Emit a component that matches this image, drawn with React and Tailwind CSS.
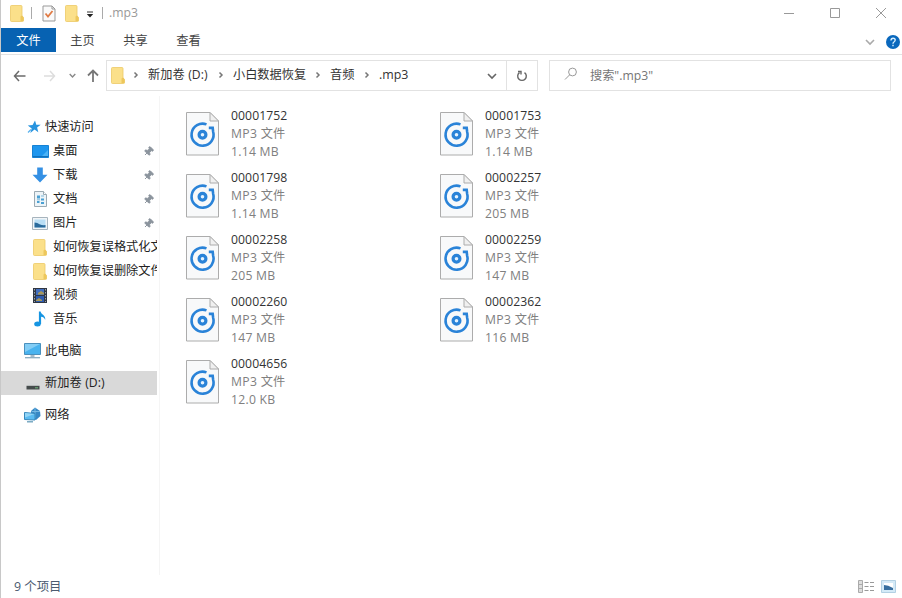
import { Pin } from 'lucide-react';

const files = [
    { name: '00001752', size: '1.14 MB' },
    { name: '00001753', size: '1.14 MB' },
    { name: '00001798', size: '1.14 MB' },
    { name: '00002257', size: '205 MB' },
    { name: '00002258', size: '205 MB' },
    { name: '00002259', size: '147 MB' },
    { name: '00002260', size: '147 MB' },
    { name: '00002362', size: '116 MB' },
    { name: '00004656', size: '12.0 KB' },
];

const FolderIcon = () => (
    <svg width="14" height="17" viewBox="0 0 14 17" className="shrink-0">
        <path d="M.5 1.5Q.5.5 1.5.5H11q1 0 1 1v9.500l1.500 1.500v3q0 1-1 1h-11q-1 0-1-1z" fill="#fbe08a" stroke="#ecc966" strokeWidth=".8" />
        <path d="M10.500 16v-4.500l1.500-1 1.500 1.500v4z" fill="#edc75c" />
    </svg>
);

const CheckDocIcon = () => (
    <svg width="14" height="17" viewBox="0 0 14 17" className="shrink-0">
        <path d="M1 1h9l3 3v12H1z" fill="#fafafa" stroke="#999" />
        <path d="M10 1v3h3" fill="none" stroke="#999" />
        <path d="M3.500 8.500l2.500 3 4.500-5.500" fill="none" stroke="#e07b45" strokeWidth="1.800" />
    </svg>
);

const Chevron = ({ className }) => (
    <svg width="6" height="8" viewBox="0 0 6 8" className={className}>
        <path d="M1.500 1.500l2.500 2.500-2.500 2.500" fill="none" stroke="#777" strokeWidth="1.500" />
    </svg>
);

const DownChevron = ({ size = 10, color = '#777', width = 1.6 }) => (
    <svg width={size} height={size} viewBox="0 0 10 10">
        <path d="M1 3l4 4 4-4" fill="none" stroke={color} strokeWidth={width} />
    </svg>
);

const StarIcon = () => (
    <svg width="14" height="14" viewBox="0 0 14 14">
        <path d="M8 .5l1.300 4.200 4.400.1-3.600 2.700 1.200 4.800-3.800-2.700L3.300 13l1.400-4.500L.8 5.400l4.800-.5z" fill="#2794df" />
        <path d="M1 12.500l3-3" stroke="#5ab2ec" strokeWidth="1.200" />
    </svg>
);

const DesktopIcon = () => (
    <svg width="17" height="13" viewBox="0 0 17 13">
        <path d="M.5.500h16v12H.5z" fill="#1e96ee" stroke="#1682d4" />
        <path d="M10 11l6-6v6z" fill="#4bb3f6" />
        <path d="M1 11.500h15" stroke="#1271bb" />
    </svg>
);

const DownloadIcon = () => (
    <svg width="16" height="16" viewBox="0 0 16 16">
        <path d="M5.200.5h5.600v7.300h4.700L8 15.500.5 7.800h4.700z" fill="#3490e4" />
    </svg>
);

const DocumentIcon = () => (
    <svg width="13" height="16" viewBox="0 0 13 16">
        <path d="M.5.500h9l3 3v12H.5z" fill="#edf4f8" stroke="#9baab3" />
        <path d="M9.500.500v3h3" fill="#fff" stroke="#9baab3" />
        <path d="M3 4.500h3v3H3zM7 7.500h3v2H7zM3 10h2.500v2H3zM7 11h3v2H7z" fill="#4aa0d3" />
        <path d="M7 5h3M3 8.800h3" stroke="#7fb9da" />
    </svg>
);

const PictureIcon = () => (
    <svg width="16" height="13" viewBox="0 0 16 13">
        <path d="M.5.500h15v12H.5z" fill="#f1f5f8" stroke="#a7b4bd" />
        <path d="M2.500 2.500h11v8h-11z" fill="#b9def5" />
        <path d="M2.500 5.500q3 0 5 1.800 3 1.200 6 .7v2.500h-11z" fill="#296a9c" />
    </svg>
);

const VideoIcon = () => (
    <svg width="14" height="15" viewBox="0 0 14 15">
        <path d="M0 0h14v15H0z" fill="#303743" />
        <path d="M3 1h8v6H3z" fill="#416fc0" />
        <path d="M3 8h8v6H3z" fill="#2e5baf" />
        <path d="M5 5l3-2 3 2v1.500H5zM3 12l3-2 3 2v1H3z" fill="#a8985a" />
        <path d="M1.500 1v13M12.500 1v13" stroke="#9aa2aa" strokeDasharray="1.500 1.500" />
    </svg>
);

const MusicIcon = () => (
    <svg width="12" height="16" viewBox="0 0 12 16">
        <ellipse cx="3.500" cy="13" rx="3.300" ry="2.500" fill="#1695e2" />
        <path d="M4.900 13V.5h1.700c.3 3 5.400 3.600 4.600 8.500-.8-2.200-2.300-3-4.100-3.200V13z" fill="#1695e2" />
    </svg>
);

const ComputerIcon = () => (
    <svg width="17" height="16" viewBox="0 0 17 16">
        <path d="M.5.500h16v11H.5z" fill="#49b3ef" stroke="#4a90bd" />
        <path d="M1 1h15L1 9z" fill="#83cdf5" />
        <path d="M6.500 12h4v2h-4z" fill="#a6bbc8" />
        <path d="M1 14.700h15" stroke="#8aabc0" strokeWidth="1.300" />
    </svg>
);

const DriveIcon = () => (
    <svg width="14" height="8" viewBox="0 0 14 8">
        <path d="M2 1h10l1.500 3H.5z" fill="#d5d7d8" />
        <path d="M.5 3.800h13v3.700H.5z" fill="#454b4b" />
        <path d="M9 5.800h3" stroke="#70b77c" />
    </svg>
);

const NetworkIcon = () => (
    <svg width="17" height="16" viewBox="0 0 17 16">
        <path d="M11 .5l5 3.500.5 5-4.500 4-5-3V4z" fill="#3788c5" />
        <path d="M11 1v10M7.500 4.500l8.500 0" fill="none" stroke="#75b8e2" />
        <path d="M.5 5.500l10.500 1v6.500l-10.500-.5z" fill="#5abbf1" stroke="#3788bc" />
        <path d="M1 6l9.500 1L1 10.500z" fill="#93d5f6" />
        <path d="M3 14.800h6" stroke="#679db9" strokeWidth="1.300" />
    </svg>
);

const Mp3Icon = () => (
    <svg width="33" height="44" viewBox="0 0 33 44" className="mt-[5px] shrink-0">
        <path d="M.5.500h23.500l8.500 8.500v34H.5z" fill="#f8f9fa" stroke="#acacac" />
        <path d="M24 .5V9h8.500z" fill="#f0f0f0" stroke="#acacac" />
        <path d="M20.500 12.400A11 11 0 1 0 27.100 19.500L26.700 15.900H22.800" fill="none" stroke="#2a83d8" strokeWidth="2.600" />
        <circle cx="16.500" cy="22.700" r="3.400" fill="#e5f3ff" stroke="#2a83d8" strokeWidth="3.200" />
    </svg>
);

const quickItems = [
    { label: '桌面', icon: <DesktopIcon />, pinned: true },
    { label: '下载', icon: <DownloadIcon />, pinned: true },
    { label: '文档', icon: <DocumentIcon />, pinned: true },
    { label: '图片', icon: <PictureIcon />, pinned: true },
    { label: '如何恢复误格式化文件', icon: <FolderIcon /> },
    { label: '如何恢复误删除文件', icon: <FolderIcon /> },
    { label: '视频', icon: <VideoIcon /> },
    { label: '音乐', icon: <MusicIcon /> },
];

const TitleBar = () => (
    <div className="flex h-7 items-center pb-0.5 pl-[9px]">
        <FolderIcon />
        <span className="ml-[7px] h-3 w-px bg-[#aaa]" />
        <span className="ml-2.5"><CheckDocIcon /></span>
        <span className="ml-[9px]"><FolderIcon /></span>
        <svg width="8" height="7" viewBox="0 0 8 7" className="ml-[7px] mt-0.5">
            <path d="M1 1h6" stroke="#333" />
            <path d="M.8 3h6.400L4 6.500z" fill="#222" />
        </svg>
        <span className="ml-2 h-3 w-px bg-[#aaa]" />
        <span className="ml-1.5 text-[12.200px] text-[#999]">.mp3</span>
        <div className="ml-auto mr-[15px] flex items-center gap-[34px]">
            <svg width="12" height="12" viewBox="0 0 12 12"><path d="M1 6.500h10" stroke="#999" /></svg>
            <svg width="12" height="12" viewBox="0 0 12 12"><path d="M1.500 1.500h9v9h-9z" fill="none" stroke="#999" /></svg>
            <svg width="12" height="12" viewBox="0 0 12 12"><path d="M1 1l10 10M11 1L1 11" stroke="#999" /></svg>
        </div>
    </div>
);

const RibbonTabs = () => (
    <div className="flex h-[27px] border-b border-[#e2e2e2] text-[#444]">
        <div className="flex h-6 w-[55px] items-center justify-center bg-[#0762b2] pt-px text-white">文件</div>
        <div className="flex h-[26px] w-[53px] items-center justify-center">主页</div>
        <div className="flex h-[26px] w-[53px] items-center justify-center">共享</div>
        <div className="flex h-[26px] w-[53px] items-center justify-center">查看</div>
        <div className="ml-auto mr-0.5 flex h-[27px] shrink-0 items-center gap-[11px]">
            <DownChevron color="#aaa" />
            <svg width="14" height="14" viewBox="0 0 14 14">
                <circle cx="7" cy="7" r="7" fill="#0a68bd" />
                <path d="M5 5.500q0-2.200 2.100-2.200T9.200 5.100Q9.200 6.200 7.900 7 7 7.500 7 8.700M7 9.800v1.400" fill="none" stroke="#d8efff" strokeWidth="1.400" />
            </svg>
        </div>
    </div>
);

const AddressBar = () => (
    <div className="flex h-[41px] items-center">
        <div className="flex w-[105px] items-center pl-3">
            <svg width="13" height="12" viewBox="0 0 13 12"><path d="M6 1L1.500 6 6 11M1.500 6h11" fill="none" stroke="#6b6b6b" strokeWidth="1.500" /></svg>
            <svg width="13" height="12" viewBox="0 0 13 12" className="ml-[17px]"><path d="M7 1l4.500 5L7 11M11.500 6H1" fill="none" stroke="#ddd" strokeWidth="1.500" /></svg>
            <span className="ml-[13px]"><DownChevron size={7} color="#888" width={2} /></span>
            <svg width="12" height="14" viewBox="0 0 12 14" className="ml-[11px]"><path d="M1 6.500l5-5 5 5M6 1.500V13" fill="none" stroke="#777" strokeWidth="1.800" /></svg>
        </div>
        <div className="flex h-[31px] w-[432px] border border-[#e2e2e2] text-[#333]">
            <div className="flex flex-1 items-center pb-px pl-1">
                <FolderIcon />
                <Chevron className="ml-2" />
                <span className="ml-[9px] w-[62px] whitespace-nowrap tracking-[0.1px]">新加卷 (D:)</span>
                <Chevron className="ml-2" />
                <span className="ml-[9px] w-[73px] whitespace-nowrap">小白数据恢复</span>
                <Chevron className="ml-[9px]" />
                <span className="ml-[9px] w-[25px] whitespace-nowrap">音频</span>
                <Chevron className="ml-[9px]" />
                <span className="ml-[9px] text-[12.400px]">.mp3</span>
                <span className="ml-auto mr-[9px] flex pt-px"><DownChevron color="#666" /></span>
            </div>
            <div className="flex w-[31px] items-center justify-center border-l border-[#e2e2e2]">
                <svg width="12" height="12" viewBox="0 0 12 12">
                    <path d="M3.500 2.600A4.300 4.300 0 1 0 8.500 2.600M2 1.500h3v3" fill="none" stroke="#666" strokeWidth="1.400" />
                </svg>
            </div>
        </div>
        <div className="ml-[11px] flex h-[31px] w-[342px] items-center border border-[#e2e2e2] pl-3.5 text-[#767676]">
            <svg width="14" height="14" viewBox="0 0 14 14" className="-mt-1">
                <circle cx="8.500" cy="5" r="3.900" fill="none" stroke="#999" />
                <path d="M5.700 7.800L1 12.500" stroke="#999" />
            </svg>
            <span className="ml-3 text-[12.200px]">搜索".mp3"</span>
        </div>
    </div>
);

const Sidebar = () => (
    <div className="w-[159px] shrink-0 border-r border-[#f5f5f5] pt-[19px] text-[#222]">
        <div className="flex h-6 items-center pl-[26px]">
            <StarIcon />
            <span className="ml-1">快速访问</span>
        </div>
        {quickItems.map((item) => (
            <div key={item.label} className="flex h-6 w-[156px] items-center overflow-hidden pl-[30px]">
                <div className="flex w-[18px] shrink-0 items-center justify-center">{item.icon}</div>
                <span className="ml-1 whitespace-nowrap">{item.label}</span>
                {item.pinned && <Pin size={11} className="ml-auto mr-[3px] rotate-45 fill-[#8b949d] text-[#8b949d]" />}
            </div>
        ))}
        <div className="mt-2 flex h-6 items-center pl-[23px]">
            <ComputerIcon />
            <span className="ml-1">此电脑</span>
        </div>
        <div className="mt-2 flex h-6 w-[156px] items-center bg-[#d9d9d9] pl-[25px]">
            <span className="mt-1.5"><DriveIcon /></span>
            <span className="ml-[5px] tracking-[0.1px]">新加卷 (D:)</span>
        </div>
        <div className="mt-2 flex h-6 items-center pl-[23px]">
            <NetworkIcon />
            <span className="ml-1">网络</span>
        </div>
    </div>
);

const StatusBar = () => (
    <div className="flex h-[22px] items-center pl-[13px] pr-1.5 pt-px text-[#4b5b70]">
        <span className="text-[12.400px]">9 个项目</span>
        <div className="ml-auto flex items-center gap-[6px]">
            <svg width="17" height="13" viewBox="0 0 17 13">
                <path d="M.5.500h4v12h-4zM.5 4.500h4M.5 8.500h4" fill="#ddd" stroke="#aaa" />
                <path d="M6.500 2.500h4M12 2.500h4M6.500 6.500h4M12 6.500h4M6.500 10.500h4M12 10.500h4" stroke="#999" />
            </svg>
            <svg width="15" height="13" viewBox="0 0 15 13">
                <path d="M.5.500h14v12H.5z" fill="#d4eaf7" stroke="#b2d0e3" />
                <path d="M3 3h9v7H3z" fill="#fff" />
                <path d="M3 5q4 0 9 3v2H3z" fill="#386fa0" />
            </svg>
        </div>
    </div>
);

const App = () => {
    return (
        <div className="flex h-[598px] w-[902px] flex-col overflow-hidden border-l border-[#c8c8c8] bg-white font-['Open_Sans','Noto_Sans_CJK_SC',sans-serif] text-[12.200px] leading-[18px]">
            <TitleBar />
            <RibbonTabs />
            <AddressBar />
            {/* the navigation pane clips long folder names */}
            <div className="flex h-[479px] shrink-0">
                <Sidebar />
                <div className="grid auto-rows-[62px] grid-cols-[254px_254px] content-start pl-[26px] pt-[11px]">
                    {files.map((file) => (
                        <div key={file.name} className="flex">
                            <Mp3Icon />
                            <div className="ml-3 text-[#808080]">
                                <p className="tracking-[0.08px] text-[#333]">{file.name}</p>
                                <p className="tracking-[0.3px]">MP3 文件</p>
                                <p className="tracking-[0.25px]">{file.size}</p>
                            </div>
                        </div>
                    ))}
                </div>
            </div>
            <StatusBar />
        </div>
    );
};

export default App;
